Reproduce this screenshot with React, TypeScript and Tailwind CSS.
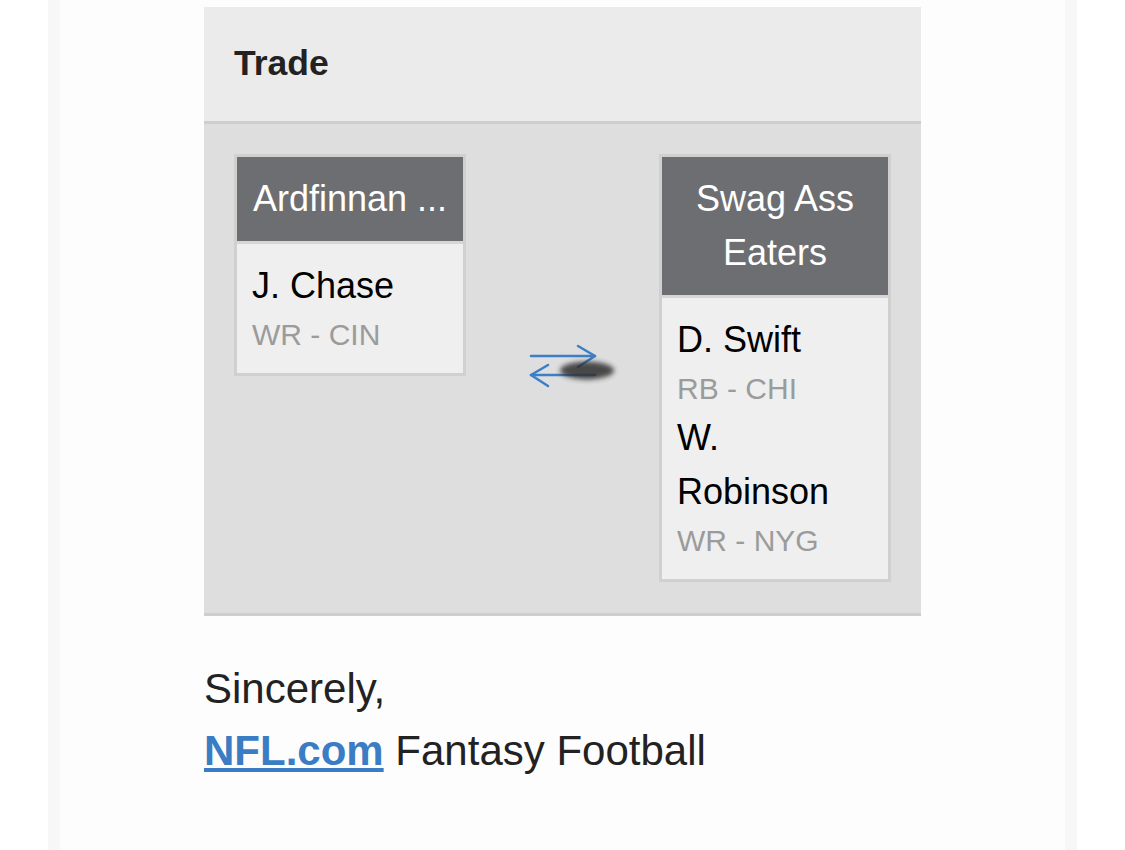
const font = { fontFamily: '"Liberation Sans", Arial, sans-serif' };

type Player = { name: string; pos: string };

function TeamCard({ team, players }: { team: string; players: Player[] }) {
  return (
    <div className="w-[232px] border-[3px] border-[#d0d0d0] bg-[#efefef]">
      <div className="bg-[#6c6e72] px-[12px] py-[15px] text-center text-[36px] leading-[54px] text-white border-b-[3px] border-[#d6d6d6]">
        {team}
      </div>
      <div className="px-[15px] pt-[15px] pb-[16px]">
        {players.map((p) => (
          <div key={p.name}>
            <div className="text-[36px] leading-[54px] text-black">{p.name}</div>
            <div className="text-[30px] leading-[44px] text-[#9b9b9b]">{p.pos}</div>
          </div>
        ))}
      </div>
    </div>
  );
}

function TradeArrows() {
  return (
    <svg width="120" height="50" viewBox="0 0 120 50" className="self-center">
      <defs>
        <filter id="smudge" x="-30%" y="-60%" width="160%" height="220%">
          <feGaussianBlur stdDeviation="2.4" />
        </filter>
      </defs>
      <g stroke="#3d7fc6" strokeWidth="2.6" fill="none" strokeLinecap="round" strokeLinejoin="round">
        <path d="M28 13 H92" />
        <path d="M75 3 L92 13 L75 24" />
        <path d="M28 32 H92" />
        <path d="M45 22 L28 32 L45 43" />
      </g>
      <ellipse cx="84" cy="27.5" rx="27" ry="9" fill="#2e2e2e" filter="url(#smudge)" opacity="0.85" />
    </svg>
  );
}

export default function App() {
  return (
    <div className="min-h-[850px] bg-white px-[48px]" style={font}>
      <div className="min-h-[850px] border-x-[12px] border-[#f7f7f7] bg-[#fdfdfd] pl-[144px] pr-[144px] pt-[7px]">
        <div className="w-[717px]">
          <div className="bg-[#ebebeb] px-[30px] pt-[30px] pb-[32px] border-b-[3px] border-[#cecece]">
            <h2 className="text-[35.5px] font-bold leading-[52px] text-[#222]">Trade</h2>
          </div>
          <div className="flex items-start justify-between bg-[#dedede] px-[30px] pt-[30px] pb-[31px] border-b-[3px] border-[#cecece]">
            <TeamCard team="Ardfinnan ..." players={[{ name: 'J. Chase', pos: 'WR - CIN' }]} />
            <TradeArrows />
            <TeamCard
              team="Swag Ass Eaters"
              players={[
                { name: 'D. Swift', pos: 'RB - CHI' },
                { name: 'W. Robinson', pos: 'WR - NYG' },
              ]}
            />
          </div>
        </div>
        <div className="mt-[42px] text-[42px] leading-[62px] text-[#222]">
          <p>Sincerely,</p>
          <p>
            <a href="#" className="font-bold text-[#3a7dc4] underline">
              NFL.com
            </a>{' '}
            Fantasy Football
          </p>
        </div>
      </div>
    </div>
  );
}
